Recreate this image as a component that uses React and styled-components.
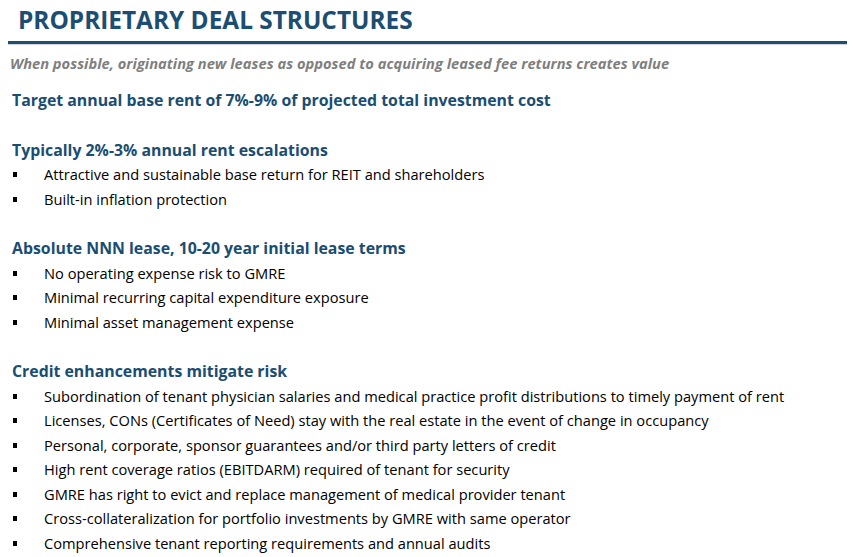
import React from "react";
import styled, { createGlobalStyle } from "styled-components";

const GlobalStyle = createGlobalStyle`
  html, body {
    margin: 0;
    padding: 0;
    background: #ffffff;
  }
  body {
    font-family: "Open Sans", Lato, "Liberation Sans", sans-serif;
    color: #000000;
  }
`;

const Slide = styled.div`
  width: 853px;
  height: 557px;
  overflow: hidden;
  background: #fff;
`;

const Header = styled.header`
  padding: 3px 6px 0 8px;
`;

const Title = styled.h1`
  margin: 0;
  padding-left: 10px;
  font-size: 24.4px;
  line-height: 33px;
  font-weight: 700;
  color: #1b4e72;
`;

const Rule = styled.div`
  margin-top: 5px;
  height: 3px;
  background: #1d4f70;
  box-shadow: 0 1px 1px rgba(0, 0, 0, 0.18);
`;

const Subtitle = styled.p`
  margin: 9px 0 0 10px;
  font-size: 14.7px;
  line-height: 20px;
  font-style: italic;
  font-weight: 700;
  color: #7f7f7f;
`;

const Body = styled.main`
  padding: 15px 0 0 12px;
`;

const Section = styled.section`
  & + & {
    margin-top: 25px;
  }
`;

const Heading = styled.h2`
  margin: 0;
  font-size: 15.85px;
  line-height: 24.5px;
  font-weight: 700;
  color: #1a4d72;
`;

const List = styled.ul`
  margin: 0;
  padding: 0;
  list-style: none;
`;

const Item = styled.li`
  display: flex;
  align-items: center;
  font-size: 14.65px;
  line-height: 24.5px;
  color: #000;

  &::before {
    content: "";
    flex: none;
    width: 4px;
    height: 5px;
    margin: 1px 27px 0 1px;
    background: #000;
  }
`;

const sections = [
  {
    title: "Target annual base rent of 7%-9% of projected total investment cost",
    items: [],
  },
  {
    title: "Typically 2%-3% annual rent escalations",
    items: [
      "Attractive and sustainable base return for REIT and shareholders",
      "Built-in inflation protection",
    ],
  },
  {
    title: "Absolute NNN lease, 10-20 year initial lease terms",
    items: [
      "No operating expense risk to GMRE",
      "Minimal recurring capital expenditure exposure",
      "Minimal asset management expense",
    ],
  },
  {
    title: "Credit enhancements mitigate risk",
    items: [
      "Subordination of tenant physician salaries and medical practice profit distributions to timely payment of rent",
      "Licenses, CONs (Certificates of Need) stay with the real estate in the event of change in occupancy",
      "Personal, corporate, sponsor guarantees and/or third party letters of credit",
      "High rent coverage ratios (EBITDARM) required of tenant for security",
      "GMRE has right to evict and replace management of medical provider tenant",
      "Cross-collateralization for portfolio investments by GMRE with same operator",
      "Comprehensive tenant reporting requirements and annual audits",
    ],
  },
];

const App = () => {
  return (
    <>
      <GlobalStyle />
      <Slide>
        <Header>
          <Title>PROPRIETARY DEAL STRUCTURES</Title>
          <Rule />
        </Header>
        <Subtitle>
          When possible, originating new leases as opposed to acquiring leased fee returns creates value
        </Subtitle>
        <Body>
          {sections.map((s) => (
            <Section key={s.title}>
              <Heading>{s.title}</Heading>
              {s.items.length > 0 && (
                <List>
                  {s.items.map((t) => (
                    <Item key={t}>{t}</Item>
                  ))}
                </List>
              )}
            </Section>
          ))}
        </Body>
      </Slide>
    </>
  );
};

export default App;
